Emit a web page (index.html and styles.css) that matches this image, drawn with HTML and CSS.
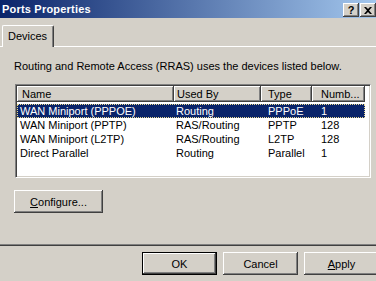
FILE: index.html
```html
<!DOCTYPE html>
<html lang="en">
<head>
    <meta charset="UTF-8">
    <meta name="viewport" content="width=device-width, initial-scale=1.0">
    <title>Ports Properties</title>
    <link rel="stylesheet" href="styles.css">
</head>
<body>
    <div class="dialog">
        <div class="titlebar">
            <span class="title">Ports Properties</span>
            <div class="caption-buttons">
                <span class="cap-btn">?</span>
                <span class="cap-btn">
                    <svg width="8" height="7" viewBox="0 0 8 7"><path d="M0 0h2l2 2 2-2h2L5 3.5 8 7H6L4 5 2 7H0l3-3.5z" fill="#000"/></svg>
                </span>
            </div>
        </div>

        <div class="tabs">
            <div class="tab">Devices</div>
        </div>

        <div class="page">
            <p class="intro">Routing and Remote Access (RRAS) uses the devices listed below.</p>

            <div class="list">
                <div class="row list-head">
                    <span class="cell col-name">Name</span>
                    <span class="cell col-used">Used By</span>
                    <span class="cell col-type">Type</span>
                    <span class="cell col-num">Numb...</span>
                </div>
                <div class="list-body">
                    <div class="row selected">
                        <span class="cell col-name">WAN Miniport (PPPOE)</span>
                        <span class="cell col-used">Routing</span>
                        <span class="cell col-type">PPPoE</span>
                        <span class="cell col-num">1</span>
                    </div>
                    <div class="row">
                        <span class="cell col-name">WAN Miniport (PPTP)</span>
                        <span class="cell col-used">RAS/Routing</span>
                        <span class="cell col-type">PPTP</span>
                        <span class="cell col-num">128</span>
                    </div>
                    <div class="row">
                        <span class="cell col-name">WAN Miniport (L2TP)</span>
                        <span class="cell col-used">RAS/Routing</span>
                        <span class="cell col-type">L2TP</span>
                        <span class="cell col-num">128</span>
                    </div>
                    <div class="row">
                        <span class="cell col-name">Direct Parallel</span>
                        <span class="cell col-used">Routing</span>
                        <span class="cell col-type">Parallel</span>
                        <span class="cell col-num">1</span>
                    </div>
                </div>
            </div>

            <button class="button configure-button"><u>C</u>onfigure...</button>
        </div>

        <div class="actions">
            <button class="button button-default">OK</button>
            <button class="button">Cancel</button>
            <button class="button"><u>A</u>pply</button>
        </div>
    </div>
</body>
</html>
```

FILE: styles.css
```css
body {
    margin: 0;
    background-color: #d4d0c8;
    font-family: "Liberation Sans", Arial, sans-serif;
    font-size: 11px;
    color: #000;
    overflow: hidden;
}
.dialog {
    width: 384px;
    height: 281px;
}

/* Title bar */
.titlebar {
    display: flex;
    justify-content: space-between;
    align-items: flex-start;
    height: 18px;
    padding: 0 8px 0 2px;
    box-sizing: border-box;
    background: linear-gradient(to right, #0a246a, #a6caf0);
}
.title {
    color: #fff;
    font-weight: bold;
    letter-spacing: 0.2px;
    line-height: 18px;
}
.caption-buttons {
    display: flex;
    gap: 1px;
    margin-top: 3px;
}
.cap-btn {
    display: flex;
    align-items: center;
    justify-content: center;
    width: 16px;
    height: 14px;
    box-sizing: border-box;
    background-color: #d4d0c8;
    font-weight: bold;
    font-size: 11px;
    line-height: 14px;
    box-shadow: inset -1px -1px #404040, inset 1px 1px #fff, inset -2px -2px #808080;
}

/* Tabs */
.tabs {
    display: flex;
    padding: 7px 0 0 2px;
}
.tab {
    position: relative;
    z-index: 1;
    width: 52px;
    height: 22px;
    margin-bottom: -1px;
    padding-left: 5px;
    box-sizing: border-box;
    line-height: 20px;
    background-color: #d4d0c8;
    border-top: 1px solid #fff;
    border-left: 1px solid #fff;
    border-right: 1px solid #404040;
    border-radius: 2px 2px 0 0;
    box-shadow: inset -1px 0 #808080;
}

/* Tab page */
.page {
    height: 200px;
    margin-left: -2px;
    padding: 13px 0 0 15px;
    box-sizing: border-box;
    border-top: 1px solid #fff;
    border-left: 1px solid #fff;
    border-right: 1px solid #404040;
    border-bottom: 1px solid #404040;
    box-shadow: inset -1px -1px #808080;
}
.intro {
    margin: 0;
    line-height: 13px;
}

/* List view */
.list {
    width: 356px;
    height: 94px;
    margin: 11px 0 0 1px;
    box-sizing: border-box;
    background-color: #fff;
    border-top: 1px solid #808080;
    border-left: 1px solid #808080;
    border-right: 1px solid #fff;
    border-bottom: 1px solid #fff;
    box-shadow: inset 1px 1px #404040, inset -1px -1px #d4d0c8;
    padding: 1px;
}
.row {
    display: grid;
    grid-template-columns: 157px 87px 51px 53px;
    height: 14px;
    line-height: 14px;
    white-space: nowrap;
}
.list-head {
    height: 16px;
    line-height: 16px;
    background-color: #d4d0c8;
    width: 348px;
}
.list-head .cell {
    box-shadow: inset -1px -1px #404040, inset 1px 1px #fff, inset -2px -2px #808080;
}
.list-body {
    padding-top: 2px;
}
.cell {
    overflow: hidden;
}
.col-name { padding-left: 3px; }
.col-used { padding-left: 2px; }
.col-type { padding-left: 7px; }
.col-num { padding-left: 9px; }
.list-head .col-name { padding-left: 5px; }
.list-head .col-used { padding-left: 3px; }

.row.selected {
    width: 348px;
    background-color: #0a246a;
    color: #fff;
    outline: 1px dotted #e8d890;
    outline-offset: -1px;
}

/* Buttons */
.button {
    width: 75px;
    height: 23px;
    padding: 0;
    border: none;
    background-color: #d4d0c8;
    font-family: inherit;
    font-size: 11px;
    color: #000;
    box-shadow: inset -1px -1px #404040, inset 1px 1px #fff, inset -2px -2px #808080;
}
.configure-button {
    display: block;
    width: 89px;
    margin-top: 12px;
}
.button-default {
    border: 1px solid #000;
}
.actions {
    display: flex;
    justify-content: flex-end;
    gap: 6px;
    padding: 6px 5px 0 0;
}
```
